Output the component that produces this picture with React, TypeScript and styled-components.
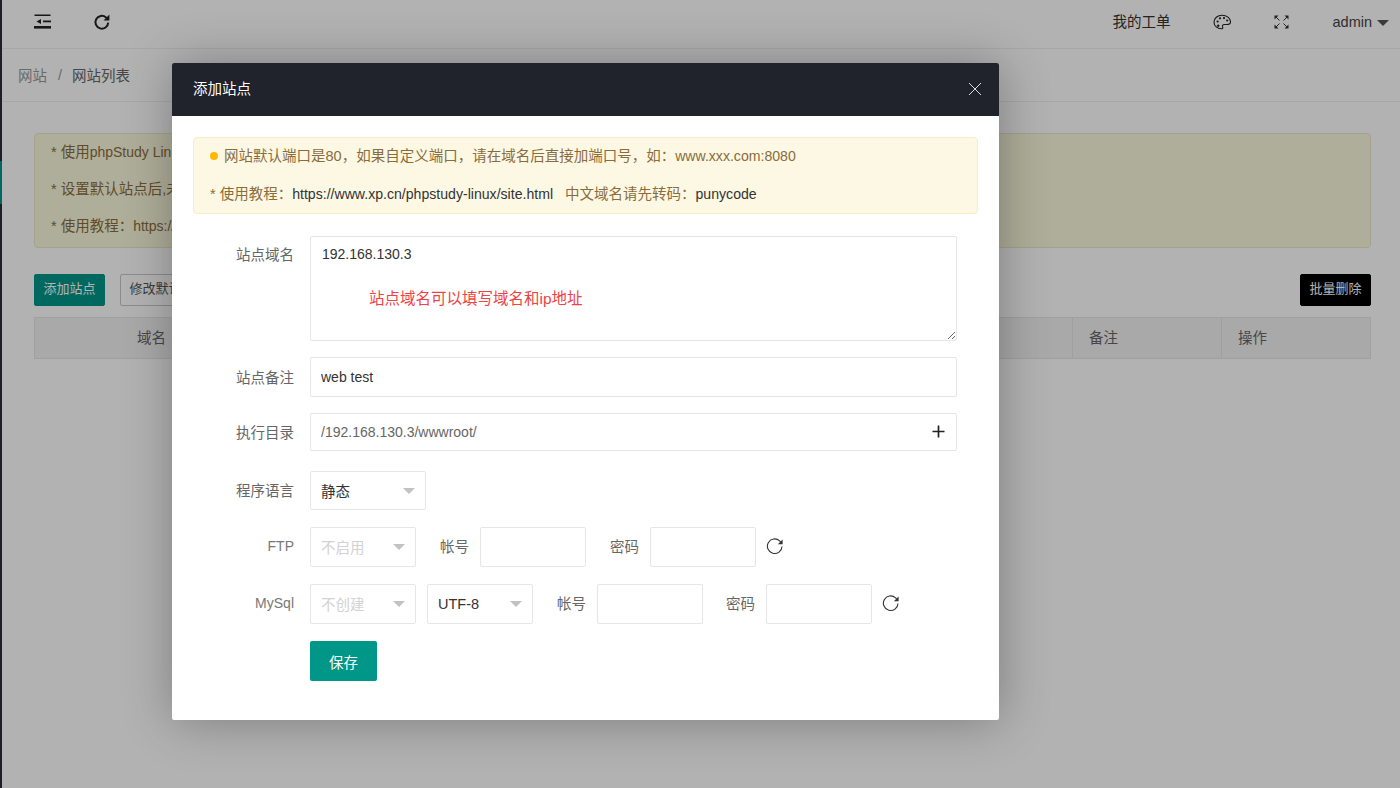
import React from "react";
import styled, { createGlobalStyle } from "styled-components";

const Global = createGlobalStyle`
  html, body { margin: 0; padding: 0; width: 1400px; height: 788px; overflow: hidden; }
  body { font-family: "Liberation Sans", "Noto Sans CJK SC", sans-serif; font-size: 14.5px; color: #333; background: #fff; }
  * { box-sizing: border-box; }
`;

const Page = styled.div`
  position: relative;
  width: 1400px;
  height: 788px;
  display: flex;
  overflow: hidden;
`;
const Sidebar = styled.div`
  width: 2px;
  flex: none;
  background: #2b2d36;
  padding-top: 161px;
`;
const SideActive = styled.div`
  height: 43px;
  background: #009688;
`;
const Main = styled.div`
  flex: 1;
  display: flex;
  flex-direction: column;
  min-width: 0;
`;
const Header = styled.header`
  height: 49px;
  flex: none;
  background: #fff;
  border-bottom: 1px solid #f0f0f0;
  display: flex;
  align-items: center;
  padding: 0 11px 4px 32px;
`;
const HeadIcons = styled.div`
  display: flex;
  align-items: center;
  gap: 41px;
  flex: 1;
`;
const HeadRight = styled.div`
  display: flex;
  align-items: center;
  color: #333;
`;
const HeadItem = styled.span<{ $mr: number; $pb?: number }>`
  display: flex;
  align-items: center;
  margin-right: ${(p) => p.$mr}px;
  padding-bottom: ${(p) => p.$pb ?? 0}px;
`;
const AdminName = styled(HeadItem)`
  font-size: 14.5px;
  color: #444;
`;
const Caret = styled.span`
  width: 0;
  height: 0;
  margin-left: 5px;
  margin-top: 1px;
  border-left: 6px solid transparent;
  border-right: 6px solid transparent;
  border-top: 6px solid #555;
`;
const Crumbs = styled.nav`
  height: 53px;
  flex: none;
  background: #fff;
  border-bottom: 1px solid #f0f0f0;
  display: flex;
  align-items: center;
  padding-left: 16px;
  padding-bottom: 1px;
  color: #666;
`;
const CrumbRoot = styled.span`
  color: #999;
`;
const CrumbSep = styled.span`
  color: #999;
  margin: 0 10px 0 11px;
`;
const Content = styled.main`
  flex: 1;
  background: #fff;
  padding: 31px 29px 0 32px;
`;
const Notice = styled.div`
  height: 115px;
  background: #fbf9dd;
  border: 1px solid #ece9c8;
  border-radius: 4px;
  padding: 0 16px 3px;
  display: flex;
  flex-direction: column;
  justify-content: space-around;
  color: #8a6d3b;
  margin-bottom: 26px;
  line-height: 22px;
`;
const NoticeLatin = styled.span`
  font-size: 14px;
`;
const Toolbar = styled.div`
  display: flex;
  align-items: center;
  gap: 15px;
  margin-bottom: 11px;
`;
const SmallBtn = styled.button<{ $bg: string; $fg: string; $bd: string }>`
  height: 32px;
  background: ${(p) => p.$bg};
  color: ${(p) => p.$fg};
  border: 1px solid ${(p) => p.$bd};
  border-radius: 2px;
  font: inherit;
  font-size: 13px;
  line-height: 28px;
  padding: 0 8.5px 2px;
`;
const Spacer = styled.div`
  flex: 1;
`;
const TableHead = styled.div`
  height: 42px;
  display: grid;
  grid-template-columns: 234px 1fr 149px 148px;
  background: #f2f2f2;
  border: 1px solid #e6e6e6;
  color: #666;
`;
const HeadCell = styled.div<{ $center?: boolean }>`
  display: flex;
  align-items: center;
  justify-content: ${(p) => (p.$center ? "center" : "flex-start")};
  padding-left: ${(p) => (p.$center ? 0 : 16)}px;
  padding-bottom: 3px;
  border-right: 1px solid #e6e6e6;
  &:last-child { border-right: 0; }
`;
const Shade = styled.div`
  position: absolute;
  inset: 0;
  background: rgba(0, 0, 0, 0.3);
`;
const Modal = styled.section`
  position: absolute;
  left: 172px;
  top: 63px;
  width: 827px;
  height: 657px;
  background: #fff;
  border-radius: 2px;
  box-shadow: 1px 1px 50px rgba(0, 0, 0, 0.3);
`;
const ModalTitle = styled.div`
  height: 53px;
  background: #20222c;
  color: #fff;
  display: flex;
  align-items: center;
  justify-content: space-between;
  padding: 0 17px 4px 21px;
  font-size: 14.5px;
  border-radius: 2px 2px 0 0;
`;
const ModalBody = styled.div`
  padding: 21px 21px 0;
`;
const Alert = styled.div`
  height: 77px;
  background: #fdf8e4;
  border: 1px solid #f9ecc9;
  border-radius: 4px;
  padding: 7px 16px 0;
  color: #8a6d3b;
  margin-bottom: 22px;
`;
const AlertLine = styled.div`
  height: 22px;
  line-height: 22px;
  display: flex;
  align-items: center;
  &:last-child { margin-top: 16px; }
`;
const Dot = styled.span`
  width: 8px;
  height: 8px;
  border-radius: 50%;
  background: #ffb800;
  margin-right: 6px;
`;
const AlertLatin = styled.span`
  font-size: 14.1px;
`;
const Dark = styled(AlertLatin)`
  color: #333;
`;
const AlertGap = styled.span`
  margin-left: 12px;
`;
const Row = styled.div<{ $h: number; $mb: number }>`
  position: relative;
  display: flex;
  align-items: center;
  height: ${(p) => p.$h}px;
  margin-bottom: ${(p) => p.$mb}px;
`;
const TopRow = styled(Row)`
  align-items: flex-start;
`;
const Label = styled.label<{ $top?: number; $bottom?: number }>`
  width: 101px;
  flex: none;
  margin-right: 16px;
  text-align: right;
  color: #666;
  padding-top: ${(p) => p.$top ?? 0}px;
  padding-bottom: ${(p) => p.$bottom ?? 2}px;
`;
const LatinLabel = styled(Label)`
  font-size: 14px;
  color: #777;
`;
const InlineLabel = styled.label<{ $ml: number }>`
  margin-left: ${(p) => p.$ml}px;
  margin-right: 11px;
  padding-bottom: 4px;
  color: #666;
`;
const TextArea = styled.textarea`
  width: 647px;
  height: 105px;
  border: 1px solid #e6e6e6;
  border-radius: 2px;
  padding: 7px 11px;
  font: inherit;
  font-size: 14px;
  color: #333;
  line-height: 20px;
  outline: none;
`;
const Annotation = styled.div`
  position: absolute;
  left: 176px;
  top: 51px;
  font-size: 15.5px;
  color: #f04245;
  line-height: 24px;
`;
const Input = styled.input<{ $w: number }>`
  width: ${(p) => p.$w}px;
  height: 100%;
  flex: none;
  border: 1px solid #e6e6e6;
  border-radius: 2px;
  padding: 0 10px;
  font: inherit;
  font-size: 14px;
  color: #333;
  outline: none;
`;
const PathBox = styled.div`
  position: relative;
  width: 647px;
  height: 100%;
`;
const PathInput = styled(Input)`
  color: #666;
`;
const PlusIcon = styled.span`
  position: absolute;
  right: 12.5px;
  top: 12px;
  display: flex;
`;
const Select = styled.div<{ $w: number; $off?: boolean; $ml?: number }>`
  position: relative;
  width: ${(p) => p.$w}px;
  height: 100%;
  flex: none;
  margin-left: ${(p) => p.$ml ?? 0}px;
  border: 1px solid #e6e6e6;
  border-radius: 2px;
  display: flex;
  align-items: center;
  padding-left: 10px;
  color: ${(p) => (p.$off ? "#d2d2d2" : "#333")};
  &::after {
    content: "";
    position: absolute;
    right: 10px;
    top: 50%;
    margin-top: -3px;
    border-left: 6px solid transparent;
    border-right: 6px solid transparent;
    border-top: 6px solid #c2c2c2;
  }
`;
const SelectText = styled.span<{ $pb?: number }>`
  padding-bottom: ${(p) => p.$pb ?? 0}px;
`;
const Regen = styled.span`
  display: flex;
  margin-left: 10px;
  margin-bottom: 3px;
`;
const SaveRow = styled.div`
  padding-left: 117px;
`;
const SaveBtn = styled.button`
  width: 67px;
  height: 40px;
  background: #009688;
  color: #fff;
  border: 0;
  border-radius: 2px;
  font: inherit;
  padding: 0;
`;
const CloseGlyph = styled.svg`
  margin-bottom: -2px;
`;

const FoldIcon = () => (
  <svg width="18" height="16" viewBox="0 0 18 16" fill="#222">
    <rect x="0.5" y="0.5" width="16" height="1.5" />
    <rect x="9" y="6.5" width="8" height="1.8" />
    <rect x="0" y="12" width="17" height="2.6" />
    <path d="M2.5 7.5 L7 5 V10 Z" />
  </svg>
);
const ReloadBold = () => (
  <svg width="18" height="18" viewBox="0 0 18 18" fill="none">
    <path d="M15.2 9.6a6.4 6.4 0 1 1-2.2-5.2l1.4 1.3" stroke="#222" strokeWidth="2" />
    <path d="M16.4 1.4V7.4H10.6Z" fill="#222" />
  </svg>
);
const PaletteIcon = () => (
  <svg width="18" height="16" viewBox="0 0 18 16" fill="none">
    <path d="M9 1.3C4.6 1.3 1 4.1 1 8.2c0 3.7 3.4 6.6 7.4 6.6 1.5 0 1.6-1 1.2-1.9-.5-1.2.2-2.4 1.6-2.4h2.6c2.2 0 3.7-1.1 3.7-2.8C17.5 4 13.7 1.3 9 1.3Z" stroke="#222" strokeWidth="1.1" />
    <circle cx="4.6" cy="7.5" r="1.1" fill="#222" />
    <circle cx="7" cy="4.3" r="1.1" fill="#222" />
    <circle cx="11" cy="4.1" r="1.1" fill="#222" />
    <circle cx="14.2" cy="6.5" r="1.1" fill="#222" />
    <path d="M5.2 10.3l1.5 1.5-1.500 1.500-1.500-1.500Z" fill="#222" />
  </svg>
);
const ScreenIcon = () => (
  <svg width="15" height="14" viewBox="0 0 15 14" fill="#333" stroke="none">
    <path d="M0.5 0.5h4l-4 4ZM14.5 0.5v4l-4-4ZM0.5 13.5v-4l4 4ZM14.5 13.500h-4l4-4Z" />
    <path d="M2 2l3.5 3.5M13 2L9.5 5.5M2 12l3.5-3.5M13 12L9.5 8.5" stroke="#333" strokeWidth="1" fill="none" />
  </svg>
);
const PlusGlyph = () => (
  <svg width="13" height="13" viewBox="0 0 13 13" stroke="#222" strokeWidth="1.7">
    <path d="M6.5 0.5v12M0.5 6.5h12" />
  </svg>
);
const ThinReload = () => (
  <svg width="18" height="18" viewBox="0 0 18 18" fill="none">
    <path d="M16 9.5a7.3 7.3 0 1 1-2.4-5.7l1 1" stroke="#333" strokeWidth="1.1" />
    <path d="M16.6 2.4V7.2H11.8Z" fill="#333" />
  </svg>
);

export default function App() {
  return (
    <Page>
      <Global />
      <Sidebar>
        <SideActive />
      </Sidebar>
      <Main>
        <Header>
          <HeadIcons>
            <FoldIcon />
            <ReloadBold />
          </HeadIcons>
          <HeadRight>
            <HeadItem $mr={42} $pb={3}>我的工单</HeadItem>
            <HeadItem $mr={43}>
              <PaletteIcon />
            </HeadItem>
            <HeadItem $mr={44}>
              <ScreenIcon />
            </HeadItem>
            <AdminName $mr={0}>
              admin
              <Caret />
            </AdminName>
          </HeadRight>
        </Header>
        <Crumbs>
          <CrumbRoot>网站</CrumbRoot>
          <CrumbSep>/</CrumbSep>
          <span>网站列表</span>
        </Crumbs>
        <Content>
          <Notice>
            <div>* 使用<NoticeLatin>phpStudy Linux</NoticeLatin>面板创建网站后，将自动生成网站目录</div>
            <div>* 设置默认站点后,未绑定域名的请求将访问默认站点</div>
            <div>* 使用教程：<NoticeLatin>https://www.xp.cn/phpstudy-linux/site.html</NoticeLatin></div>
          </Notice>
          <Toolbar>
            <SmallBtn $bg="#009688" $fg="#fff" $bd="#009688">添加站点</SmallBtn>
            <SmallBtn $bg="#fff" $fg="#555" $bd="#c9c9c9">修改默认页</SmallBtn>
            <Spacer />
            <SmallBtn $bg="#000" $fg="#fff" $bd="#000">批量删除</SmallBtn>
          </Toolbar>
          <TableHead>
            <HeadCell $center>域名</HeadCell>
            <HeadCell />
            <HeadCell>备注</HeadCell>
            <HeadCell>操作</HeadCell>
          </TableHead>
        </Content>
      </Main>
      <Shade />
      <Modal>
        <ModalTitle>
          添加站点
          <CloseGlyph width="14" height="14" viewBox="0 0 14 14" stroke="#ddd" strokeWidth="1">
            <path d="M1 1l12 12M13 1L1 13" />
          </CloseGlyph>
        </ModalTitle>
        <ModalBody>
          <Alert>
            <AlertLine>
              <Dot />
              网站默认端口是80，如果自定义端口，请在域名后直接加端口号，如：<AlertLatin>www.xxx.com:8080</AlertLatin>
            </AlertLine>
            <AlertLine>
              * 使用教程：<Dark>https://www.xp.cn/phpstudy-linux/site.html</Dark>
              <AlertGap>中文域名请先转码：</AlertGap>
              <Dark>punycode</Dark>
            </AlertLine>
          </Alert>
          <TopRow $h={105} $mb={16}>
            <Label $top={7}>站点域名</Label>
            <TextArea readOnly value="192.168.130.3" />
            <Annotation>站点域名可以填写域名和ip地址</Annotation>
          </TopRow>
          <Row $h={40} $mb={16}>
            <Label>站点备注</Label>
            <Input $w={647} readOnly value="web test" />
          </Row>
          <Row $h={38} $mb={20}>
            <Label>执行目录</Label>
            <PathBox>
              <PathInput $w={647} readOnly value="/192.168.130.3/wwwroot/" />
              <PlusIcon>
                <PlusGlyph />
              </PlusIcon>
            </PathBox>
          </Row>
          <Row $h={39} $mb={17}>
            <Label>程序语言</Label>
            <Select $w={116}>静态</Select>
          </Row>
          <Row $h={40} $mb={17}>
            <LatinLabel>FTP</LatinLabel>
            <Select $w={106} $off><SelectText $pb={2}>不启用</SelectText></Select>
            <InlineLabel $ml={24}>帐号</InlineLabel>
            <Input $w={106} readOnly />
            <InlineLabel $ml={24}>密码</InlineLabel>
            <Input $w={106} readOnly />
            <Regen>
              <ThinReload />
            </Regen>
          </Row>
          <Row $h={40} $mb={17}>
            <LatinLabel>MySql</LatinLabel>
            <Select $w={106} $off><SelectText $pb={2}>不创建</SelectText></Select>
            <Select $w={106} $ml={11}><SelectText>UTF-8</SelectText></Select>
            <InlineLabel $ml={24}>帐号</InlineLabel>
            <Input $w={106} readOnly />
            <InlineLabel $ml={23}>密码</InlineLabel>
            <Input $w={106} readOnly />
            <Regen>
              <ThinReload />
            </Regen>
          </Row>
          <SaveRow>
            <SaveBtn>保存</SaveBtn>
          </SaveRow>
        </ModalBody>
      </Modal>
    </Page>
  );
}
